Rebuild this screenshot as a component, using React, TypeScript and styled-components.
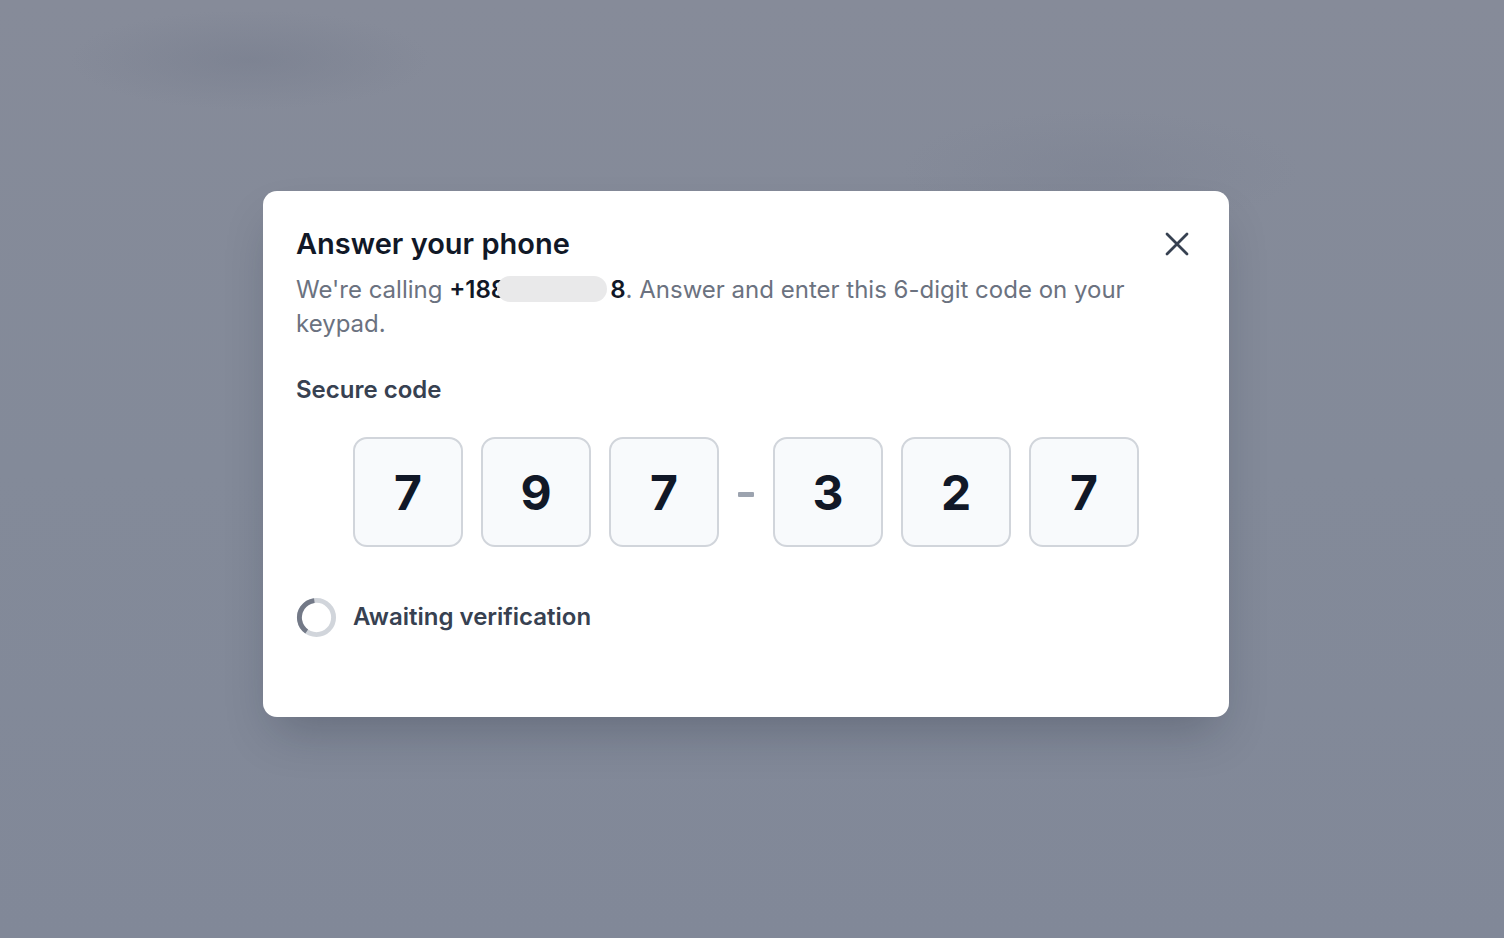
import React from 'react'
import styled, { createGlobalStyle } from 'styled-components'

const GlobalStyle = createGlobalStyle`
  html, body {
    margin: 0;
    padding: 0;
    height: 100%;
  }
  body {
    font-family: Inter, "Noto Sans", "Liberation Sans", sans-serif;
    -webkit-font-smoothing: antialiased;
  }
`

const CODE = ['7', '9', '7', '3', '2', '7']

const Backdrop = styled.div`
  width: 1504px;
  height: 938px;
  display: flex;
  justify-content: center;
  align-items: flex-start;
  padding: 191px 12px 0 0;
  box-sizing: border-box;
  background:
    radial-gradient(ellipse 180px 50px at 250px 60px, rgba(120, 126, 142, 0.6), transparent),
    radial-gradient(ellipse 200px 60px at 1100px 170px, rgba(122, 128, 144, 0.4), transparent),
    linear-gradient(180deg, #868b99 0%, #838a99 50%, #818898 100%);
`

const Modal = styled.div`
  width: 966px;
  height: 526px;
  box-sizing: border-box;
  background: #ffffff;
  border-radius: 14px;
  padding: 33px 33px 0 33px;
  box-shadow: 0 24px 48px -12px rgba(17, 24, 39, 0.25);
  display: flex;
  flex-direction: column;
`

const Header = styled.div`
  display: flex;
  align-items: center;
  justify-content: space-between;
  height: 40px;
`

const Title = styled.h2`
  margin: 0;
  font-size: 29px;
  line-height: 40px;
  font-weight: 600;
  color: #111827;
`

const CloseButton = styled.button`
  border: 0;
  background: transparent;
  padding: 0;
  margin: 0 6px 0 0;
  width: 26px;
  height: 26px;
  display: flex;
  align-items: center;
  justify-content: center;
  color: #374151;
  cursor: pointer;
`

const Description = styled.p`
  margin: 9px 0 0 0;
  font-size: 24px;
  line-height: 34px;
  color: #6b7280;
  max-width: 860px;
`

const Phone = styled.span`
  font-weight: 600;
  color: #111827;
`

const Redacted = styled.span`
  display: inline-block;
  vertical-align: middle;
  width: 110px;
  height: 26px;
  margin: -4px 3px 0 -9px;
  border-radius: 13px;
  background: #e9e9ea;
`

const Label = styled.div`
  margin-top: 32px;
  font-size: 24px;
  line-height: 34px;
  font-weight: 600;
  color: #374151;
`

const CodeRow = styled.div`
  margin-top: 30px;
  display: flex;
  justify-content: center;
  align-items: center;
  gap: 18px;
`

const Digit = styled.div`
  width: 110px;
  height: 110px;
  box-sizing: border-box;
  border: 2px solid #d1d5db;
  border-radius: 14px;
  background: #f8fafc;
  display: flex;
  align-items: center;
  justify-content: center;
  font-size: 48px;
  font-weight: 700;
  color: #111827;
`

const Dash = styled.div`
  width: 16px;
  height: 5px;
  margin: 4px 1px 0;
  border-radius: 1px;
  background: #9ca3af;
`

const Status = styled.div`
  margin-top: 49px;
  display: flex;
  align-items: center;
  gap: 16px;
  height: 42px;
`

const StatusText = styled.span`
  font-size: 24px;
  line-height: 34px;
  font-weight: 600;
  color: #374151;
`

function Spinner() {
  const r = 17.5
  const c = 2 * Math.PI * r
  return (
    <svg width="41" height="41" viewBox="0 0 42 42">
      <circle cx="21" cy="21" r={r} fill="none" stroke="#d1d5db" strokeWidth="5" />
      <circle
        cx="21"
        cy="21"
        r={r}
        fill="none"
        stroke="#737987"
        strokeWidth="5"
        strokeDasharray={`${c * 0.38} ${c}`}
        transform="rotate(125 21 21)"
      />
    </svg>
  )
}

export default function App() {
  return (
    <>
      <GlobalStyle />
      <Backdrop>
        <Modal>
          <Header>
            <Title>Answer your phone</Title>
            <CloseButton aria-label="Close">
              <svg width="24" height="24" viewBox="0 0 24 24" fill="none" stroke="currentColor" strokeWidth="2.8" strokeLinecap="round">
                <path d="M2 2 L22 22 M22 2 L2 22" />
              </svg>
            </CloseButton>
          </Header>
          <Description>
            We're calling <Phone>+188<Redacted />8</Phone>. Answer and enter this 6-digit code on your keypad.
          </Description>
          <Label>Secure code</Label>
          <CodeRow>
            {CODE.slice(0, 3).map((d, i) => <Digit key={`a${i}`}>{d}</Digit>)}
            <Dash />
            {CODE.slice(3).map((d, i) => <Digit key={`b${i}`}>{d}</Digit>)}
          </CodeRow>
          <Status>
            <Spinner />
            <StatusText>Awaiting verification</StatusText>
          </Status>
        </Modal>
      </Backdrop>
    </>
  )
}
